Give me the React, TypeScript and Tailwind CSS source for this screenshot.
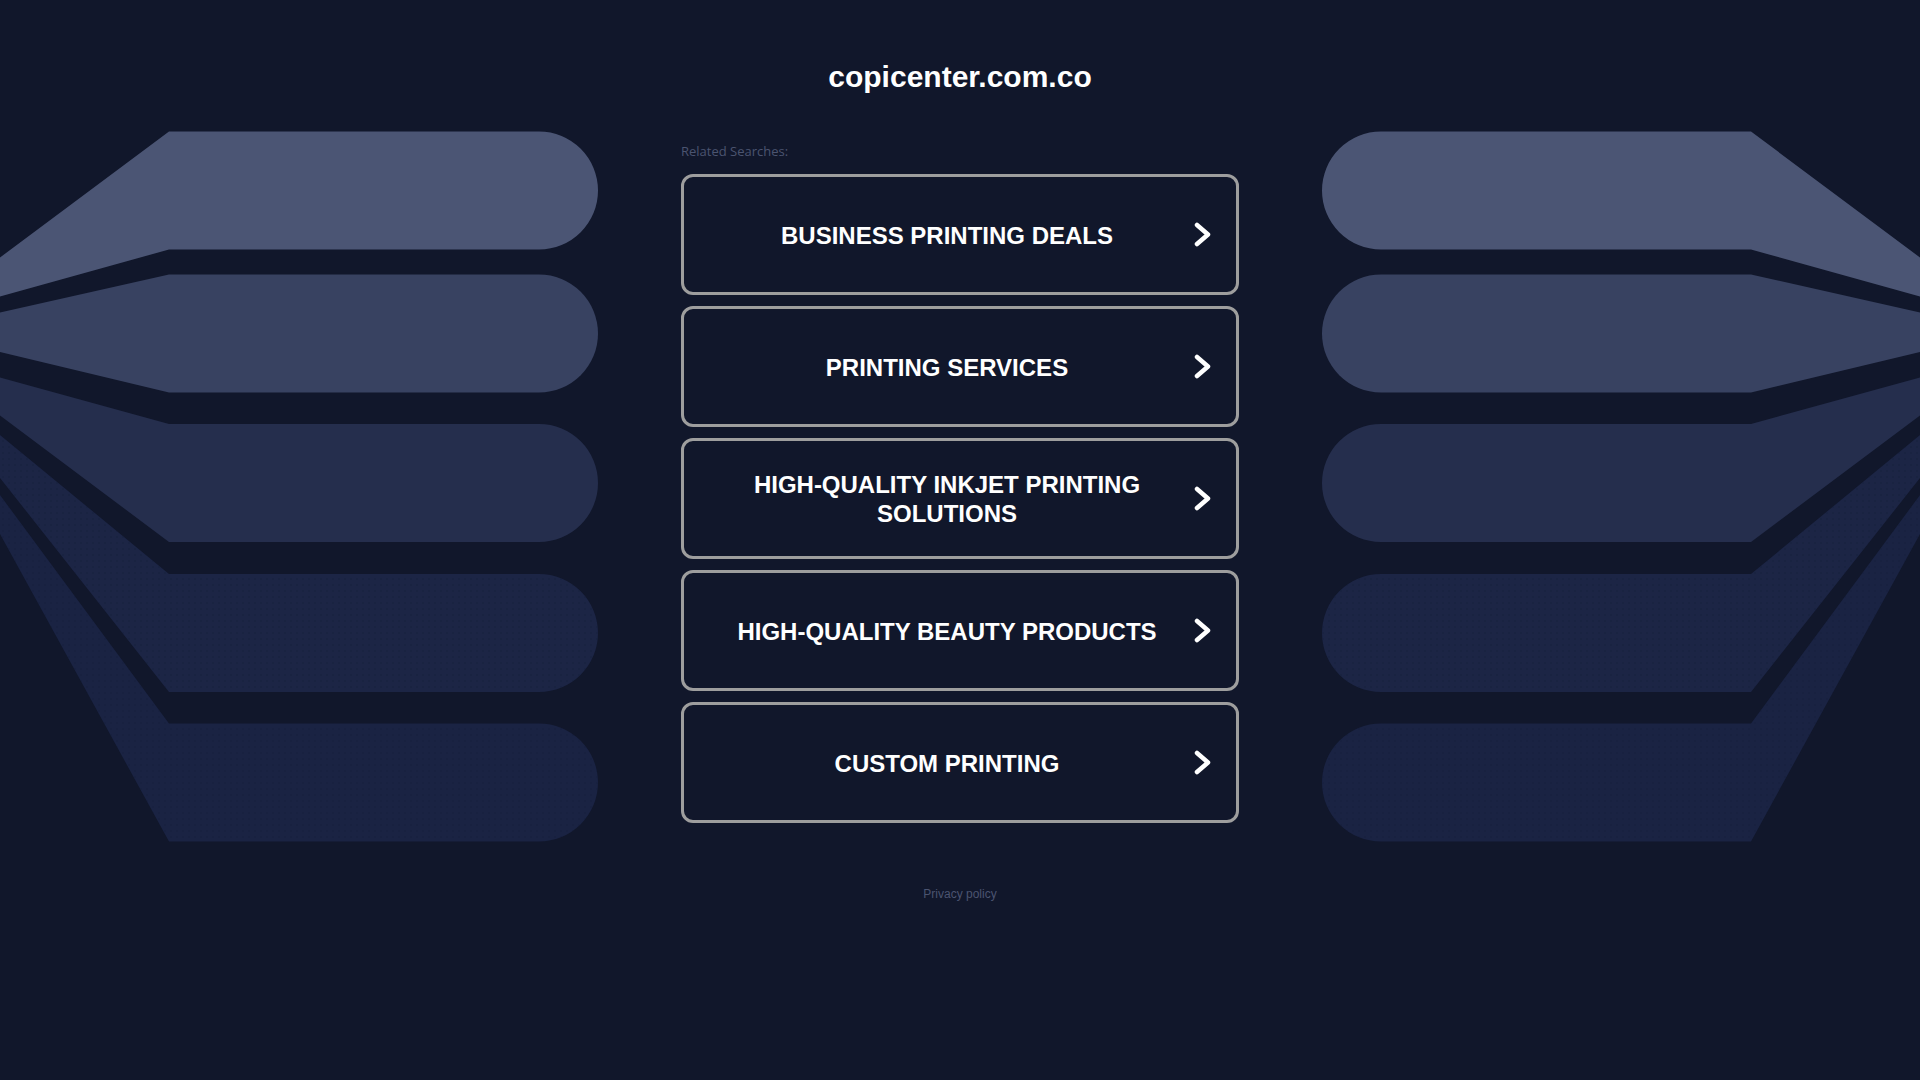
const SEARCHES = [
  "BUSINESS PRINTING DEALS",
  "PRINTING SERVICES",
  "HIGH-QUALITY INKJET PRINTING SOLUTIONS",
  "HIGH-QUALITY BEAUTY PRODUCTS",
  "CUSTOM PRINTING",
];

// left-hand fan of bars; the right side is the same drawing mirrored
const BARS = [
  { top: 131.5, bottom: 249.5, edgeTop: 257.5, edgeBottom: 296.5, fill: "#4b5574", dots: false },
  { top: 274.5, bottom: 392.5, edgeTop: 312.5, edgeBottom: 352, fill: "#384261", dots: false },
  { top: 424, bottom: 542, edgeTop: 377.5, edgeBottom: 415.5, fill: "#252e4d", dots: false },
  { top: 574, bottom: 692, edgeTop: 435, edgeBottom: 478, fill: "#1c2545", dots: true },
  { top: 723.5, bottom: 841.5, edgeTop: 495, edgeBottom: 534, fill: "#1a2343", dots: true },
];

function barPath(b: (typeof BARS)[number]) {
  const r = (b.bottom - b.top) / 2;
  return `M0,${b.edgeTop} L169,${b.top} H539 A${r},${r} 0 0 1 539,${b.bottom} H169 L0,${b.edgeBottom} Z`;
}

function Fan() {
  return (
    <g>
      {BARS.map((b, i) => (
        <g key={i}>
          <path d={barPath(b)} fill={b.fill} />
          {b.dots ? <path d={barPath(b)} fill="url(#dots)" /> : null}
        </g>
      ))}
    </g>
  );
}

function Backdrop() {
  return (
    <svg
      className="absolute inset-0 pointer-events-none"
      width="1920"
      height="1080"
      viewBox="0 0 1920 1080"
    >
      <defs>
        <pattern id="dots" width="6" height="6" patternUnits="userSpaceOnUse">
          <circle cx="3" cy="3" r="0.7" fill="#0f1530" opacity="0.55" />
        </pattern>
      </defs>
      <Fan />
      <g transform="translate(1920,0) scale(-1,1)">
        <Fan />
      </g>
    </svg>
  );
}

function Chevron() {
  return (
    <svg width="17" height="25" viewBox="0 0 17 25" className="shrink-0">
      <polyline
        points="3,3 14,12.5 3,22"
        fill="none"
        stroke="#ffffff"
        strokeWidth="4.5"
        strokeLinecap="round"
        strokeLinejoin="round"
      />
    </svg>
  );
}

function SearchLink({ label }: { label: string }) {
  return (
    <a
      href="#"
      className="flex items-center h-[121px] rounded-[12px] border-[3px] border-[#9e9e9e] pl-[25px] pr-[25px] gap-[9px]"
    >
      <span className="flex-1 pt-[3px] text-center text-white font-bold text-[24px] leading-[28.8px] font-['Liberation_Sans',Arial,sans-serif]">
        {label}
      </span>
      <Chevron />
    </a>
  );
}

export default function App() {
  return (
    <div className="relative w-full min-h-screen bg-[#11172b] overflow-hidden">
      <Backdrop />
      <div className="relative flex flex-col items-center pt-[59px]">
        <h1 className="text-white font-bold text-[30px] leading-[36px] font-['Liberation_Sans',Arial,sans-serif]">
          copicenter.com.co
        </h1>
        <div className="w-[558px] mt-[48px] flex flex-col">
          <p className="text-[13px] leading-[16px] text-[#4b5470] font-['Open_Sans',sans-serif]">
            Related Searches:
          </p>
          <div className="mt-[15px] flex flex-col gap-[11px]">
            {SEARCHES.map((s) => (
              <SearchLink key={s} label={s} />
            ))}
          </div>
        </div>
        <a
          href="#"
          className="mt-[63px] text-[12px] leading-[16px] text-[#4b5470] font-['Liberation_Sans',Arial,sans-serif]"
        >
          Privacy policy
        </a>
      </div>
    </div>
  );
}
